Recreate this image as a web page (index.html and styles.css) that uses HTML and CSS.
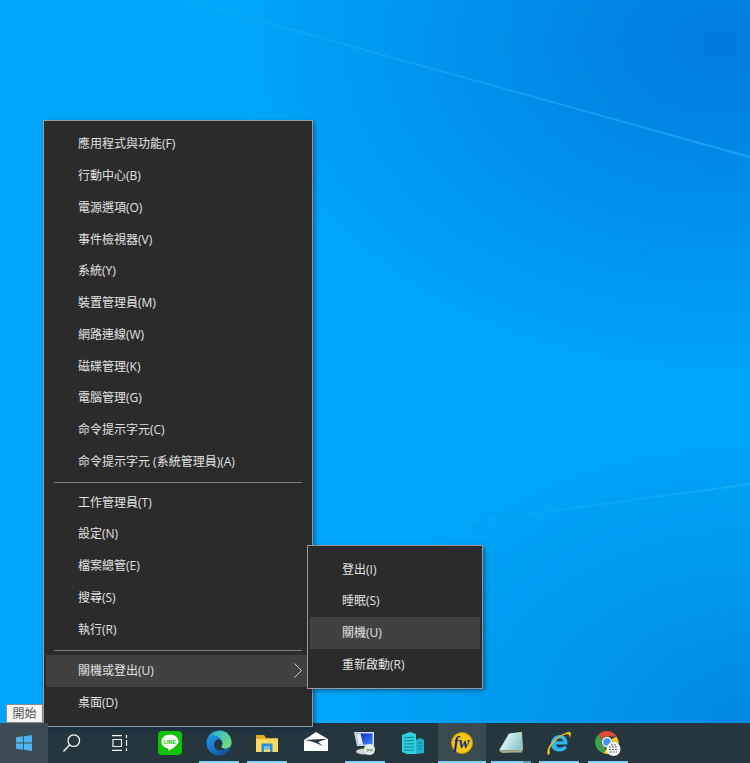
FILE: index.html
```html
<!DOCTYPE html>
<html lang="zh-Hant">
<head>
<meta charset="utf-8">
<title>Windows 10 Start context menu</title>
<link rel="stylesheet" href="styles.css">
</head>
<body>
<div class="desktop">
  <main class="wallpaper">
    <svg class="beams" viewBox="0 0 750 723" aria-hidden="true">
      <defs>
        <linearGradient id="upperBeam" x1="0" y1="0" x2="1" y2="0">
          <stop offset="0" stop-color="#1fb0fa" stop-opacity="0.25"/>
          <stop offset="1" stop-color="#28b0f5" stop-opacity="0.7"/>
        </linearGradient>
        <linearGradient id="lowerBeam" x1="0" y1="0" x2="1" y2="0">
          <stop offset="0" stop-color="#30bdfa" stop-opacity="0"/>
          <stop offset="1" stop-color="#30bdfa" stop-opacity="0.4"/>
        </linearGradient>
      </defs>
      <path d="M185 0 750 157" stroke="url(#upperBeam)" stroke-width="2" fill="none"/>
      <path d="M390 533C520 515 640 498 750 484" stroke="url(#lowerBeam)" stroke-width="2" fill="none"/>
    </svg>

    <div class="tooltip">開始</div>

    <nav class="menu menu-main">
      <div class="menu-item">應用程式與功能(F)</div>
      <div class="menu-item">行動中心(B)</div>
      <div class="menu-item">電源選項(O)</div>
      <div class="menu-item">事件檢視器(V)</div>
      <div class="menu-item">系統(Y)</div>
      <div class="menu-item">裝置管理員(M)</div>
      <div class="menu-item">網路連線(W)</div>
      <div class="menu-item">磁碟管理(K)</div>
      <div class="menu-item">電腦管理(G)</div>
      <div class="menu-item">命令提示字元(C)</div>
      <div class="menu-item">命令提示字元 (系統管理員)(A)</div>
      <div class="menu-sep menu-sep-tight"></div>
      <div class="menu-item">工作管理員(T)</div>
      <div class="menu-item">設定(N)</div>
      <div class="menu-item">檔案總管(E)</div>
      <div class="menu-item">搜尋(S)</div>
      <div class="menu-item">執行(R)</div>
      <div class="menu-sep"></div>
      <div class="menu-item is-active">
        <span>關機或登出(U)</span>
        <svg class="chevron" viewBox="0 0 8 15" aria-hidden="true"><path d="M.5 .5 7.500 7.500 .5 14.500" fill="none" stroke="#d0d0d0" stroke-width="1"/></svg>
      </div>
      <div class="menu-item">桌面(D)</div>
    </nav>

    <nav class="menu menu-sub">
      <div class="menu-item">登出(I)</div>
      <div class="menu-item">睡眠(S)</div>
      <div class="menu-item is-active">關機(U)</div>
      <div class="menu-item">重新啟動(R)</div>
    </nav>
  </main>

  <footer class="taskbar">
    <div class="task task-fixed task-start">
      <svg class="ic-16" viewBox="0 0 16 16" aria-hidden="true"><path d="M0 2.300 6.900 1.300V7.500H0ZM7.800 1.200 16 0V7.500H7.800ZM0 8.400H6.900V14.700L0 13.700ZM7.800 8.400H16V16L7.800 14.800Z" fill="#4db4f0"/></svg>
    </div>
    <div class="task task-fixed">
      <svg class="ic-20" viewBox="0 0 20 20" aria-hidden="true"><circle cx="11.800" cy="7.600" r="5.800" fill="none" stroke="#f2f2f2" stroke-width="1.300"/><path d="M7.600 11.800 1.500 18.500" stroke="#f2f2f2" stroke-width="1.500"/></svg>
    </div>
    <div class="task task-fixed task-view">
      <svg class="ic-16" viewBox="0 0 16 16" aria-hidden="true"><path d="M0 .6H10M0 15.400H10M1 4.500H9.500V11.500H1ZM14.500 0V3M14.500 5V11M14.500 13V16" fill="none" stroke="#f2f2f2" stroke-width="1.200"/></svg>
    </div>
    <div class="task task-first">
      <svg class="ic-24" viewBox="0 0 24 24" aria-hidden="true"><rect width="24" height="24" rx="4" fill="#0fc300"/><path d="M12 3.500C7 3.500 3.400 6.800 3.400 10.800c0 3.400 2.800 6 6.600 6.600.6.100.5 1.600.3 2.400 3-1.300 6-3.300 8-5.400C19.900 13 20.600 12 20.600 10.800 20.600 6.800 17 3.500 12 3.500Z" fill="#fff"/><text class="line-text" x="12" y="12.800" text-anchor="middle">LINE</text></svg>
    </div>
    <div class="task is-open">
      <svg class="ic-26" viewBox="0 0 26 26" aria-hidden="true">
        <defs>
          <linearGradient id="edgeBlue" x1="0" y1="0" x2="0.7" y2="1"><stop offset="0" stop-color="#1fa3e6"/><stop offset="0.6" stop-color="#1878c8"/><stop offset="1" stop-color="#0c4f98"/></linearGradient>
          <linearGradient id="edgeGreen" x1="0" y1="0" x2="1" y2="1"><stop offset="0" stop-color="#22b5d0"/><stop offset="1" stop-color="#86e070"/></linearGradient>
        </defs>
        <circle cx="13" cy="13" r="12.500" fill="url(#edgeBlue)"/>
        <path d="M5 5.500C8 1.500 13 .3 17 1 22 2.300 25.500 7 25.500 12.500 25.500 16 23 18.500 19 18.500 17 18.500 15 17.800 15 16.800 16.500 15.500 17 14 16.500 12 15.500 8 10.500 4.500 5 5.500Z" fill="url(#edgeGreen)"/>
        <path d="M8 15C8 11.500 10.500 9 13 9.500 15.500 10 17 13 15.500 15.500 15 17 15.500 18.500 19 19 17 20 12 21.500 10 19 8.800 18 8 16.500 8 15Z" fill="#25363f"/>
      </svg>
    </div>
    <div class="task is-open">
      <svg class="ic-folder" viewBox="0 0 22 17" aria-hidden="true"><path d="M0 0H8L10 3H22V17H0Z" fill="#e9a820"/><path d="M0 4H22V17H0Z" fill="#fbd860"/><path d="M5.500 8.500H16.500V17H14V11.500H8V17H5.500Z" fill="#2a8fd8"/><rect x="8" y="11.500" width="6" height="3" fill="#6cc2f2"/></svg>
    </div>
    <div class="task">
      <svg class="ic-24" viewBox="0 0 24 24" aria-hidden="true"><path d="M0 9 12 1 24 8V20H0Z" fill="#fff"/><path d="M1 9 23 7.700 14 11 19 15 9.500 11Z" fill="#25363f"/></svg>
    </div>
    <div class="task is-open">
      <svg class="ic-24" viewBox="0 0 24 24" aria-hidden="true"><defs><linearGradient id="pcBlue" x1="0" y1="0" x2="1" y2="1"><stop offset="0" stop-color="#0a1fc8"/><stop offset="1" stop-color="#3f86f0"/></linearGradient></defs><path d="M1 1H21V15H4Z" fill="#cfd8e6"/><path d="M3 2.500H19.500V13.500H5.500Z" fill="url(#pcBlue)"/><path d="M3 2.500H7.500L10 13.500H5.500Z" fill="#e8effc"/><ellipse cx="11" cy="20.500" rx="8" ry="3" fill="#cfd3d6"/><circle cx="16.500" cy="18.500" r="5.500" fill="#e6e9e6"/><text class="mini-x" x="16.500" y="20.500" text-anchor="middle">&gt;&lt;</text></svg>
    </div>
    <div class="task">
      <svg class="ic-24" viewBox="0 0 24 24" aria-hidden="true"><path d="M1 4 9 1 15 3V23H6L1 21Z" fill="#30d2de"/><path d="M15 9 19 7 23 9V22L15 23Z" fill="#22b4cc"/><path d="M3 7 13 6M3 10 13 9.500M3 13 13 12.800M3 16 13 16M3 19 13 19.300M17 12H21.500M17 15H21.500M17 18H21.500" stroke="#0d7d92" stroke-width="1"/></svg>
    </div>
    <div class="task is-open is-focus">
      <svg class="ic-22" viewBox="0 0 22 22" aria-hidden="true"><circle cx="11" cy="11" r="10.500" fill="#f5c518" stroke="#c99a00" stroke-width="1"/><text class="fw-text" x="10.500" y="15.500" text-anchor="middle">fw</text></svg>
    </div>
    <div class="task is-open is-stacked">
      <svg class="ic-24" viewBox="0 0 24 24" aria-hidden="true"><defs><linearGradient id="padSheet" x1="0" y1="0" x2="1" y2="0.500"><stop offset="0" stop-color="#1f7f8c"/><stop offset="0.4" stop-color="#d6eef0"/><stop offset="1" stop-color="#8fc8cc"/></linearGradient></defs><path d="M20 1.500 23 1 24 19H20Z" fill="#c9c4a0"/><path d="M10 2.500 22 1 23.500 19 0 19.500Z" fill="url(#padSheet)"/><path d="M0 19.500 23.500 19 23 21.500 3 22Z" fill="#a9aa8c"/></svg>
    </div>
    <div class="task is-open">
      <svg class="ic-26" viewBox="0 0 26 26" aria-hidden="true"><path d="M13.500 5C19 5 22 9 21.500 14.500H10C10.500 18 15.500 18.800 19 15.500L21 18.500C15 24 5 22 5 14 5 9 8.500 5 13.500 5Z" fill="#2fb4ea"/><path d="M10 11.300H17C16.800 7.500 10.800 7.500 10 11.300Z" fill="#25363f"/><path d="M2 25C-1 21 5 8 22 2 25 1 26 4 23.500 8 24 4 22 3 17 5.500 8 10 2 19 4 22.500 3.500 24 3 25 2 25Z" fill="#f2bd22"/></svg>
    </div>
    <div class="task is-open">
      <svg class="ic-26" viewBox="0 0 26 26" aria-hidden="true"><path d="M12 1A11 11 0 0 1 21.500 6.500H12A5.500 5.500 0 0 0 7 10L3.500 4.500A11 11 0 0 1 12 1Z" fill="#e04a3a"/><path d="M3.500 4.500 7 10A5.500 5.500 0 0 0 11 17.500L8 23A11 11 0 0 1 3.500 4.500Z" fill="#3da44d"/><path d="M21.500 6.500A11 11 0 0 1 8 23L13 17A5.500 5.500 0 0 0 16.500 9Z" fill="#f6c52d"/><circle cx="12" cy="12" r="4.500" fill="#4a90e8" stroke="#fff" stroke-width="1.300"/><circle cx="18.500" cy="19" r="7" fill="#f5f5f5"/><path d="M14 17H23M14 19.500H23M15 22H22M16 15H21" stroke="#666" stroke-width="1" stroke-dasharray="2 1"/></svg>
    </div>
  </footer>
</div>
</body>
</html>
```

FILE: styles.css
```css
* { box-sizing: border-box; }

html, body {
  margin: 0;
  height: 100%;
  overflow: hidden;
}

.desktop {
  display: flex;
  flex-direction: column;
  width: 750px;
  height: 763px;
  font-family: "Open Sans", "Noto Sans CJK TC", sans-serif;
}

.wallpaper {
  position: relative;
  flex: 1;
  background:
    radial-gradient(ellipse 480px 340px at 96% 6%, #007bdc 0%, rgba(0, 128, 224, 0.7) 38%, rgba(0, 150, 240, 0) 100%),
    radial-gradient(ellipse 420px 300px at 100% 100%, #0088e0 0%, rgba(0, 140, 228, 0.6) 40%, rgba(0, 160, 245, 0) 100%),
    #00a6f8;
}

.beams {
  position: absolute;
  inset: 0;
  width: 100%;
  height: 100%;
}

.tooltip {
  position: absolute;
  left: 6px;
  top: 704px;
  width: 37px;
  height: 19px;
  background: #f6f6f6;
  border: 1px solid #8e8e8e;
  color: #555;
  font-size: 12px;
  line-height: 17px;
  text-align: center;
}

.menu {
  position: absolute;
  display: flex;
  flex-direction: column;
  background: #2b2b2b;
  border: 1px solid #9a9a9a;
  box-shadow: 2px 2px 4px rgba(0, 30, 60, 0.45);
  color: #e2e2e2;
  font-size: 12px;
}

.menu-main {
  left: 43px;
  top: 120px;
  width: 270px;
  height: 607px;
  padding: 7.25px 2px 0;
}

.menu-sub {
  left: 307px;
  top: 545px;
  width: 176px;
  height: 144px;
  padding: 7.5px 2px 0;
}

.menu-item {
  display: flex;
  flex: none;
  align-items: center;
  justify-content: space-between;
  height: 31.75px;
  padding: 0 8px 1.5px 32px;
  white-space: nowrap;
}

.menu-item.is-active {
  background: #414141;
}

.chevron {
  width: 8px;
  height: 15px;
}

.menu-sep {
  flex: none;
  height: 1px;
  margin: 4.75px 8px 4px;
  background: #7c7c7c;
}

.menu-sep-tight {
  margin-top: 4px;
}

.taskbar {
  display: flex;
  flex: none;
  align-items: center;
  height: 40px;
  background: #25363f;
}

.task {
  position: relative;
  display: flex;
  flex: none;
  align-items: center;
  justify-content: center;
  width: 48.67px;
  height: 40px;
}

.task-fixed {
  width: 48px;
}

.task-first {
  margin-left: 1.6px;
}

.task-start {
  background: #3d4c54;
}

.task-view svg {
  margin-right: 1px;
}

.is-focus {
  background: #3b4950;
}

.is-open::after {
  content: "";
  position: absolute;
  left: 4.33px;
  right: 4.33px;
  bottom: 0;
  height: 2px;
  background: #7fd0f5;
}

.is-focus::after {
  left: 0;
  right: 0;
}

.is-stacked::after {
  background: linear-gradient(90deg, #7fd0f5 0 32px, #5f9fbf 32px);
}

.ic-16 { width: 16px; height: 16px; }
.ic-20 { width: 20px; height: 20px; }
.ic-22 { width: 22px; height: 22px; }
.ic-24 { width: 24px; height: 24px; }
.ic-26 { width: 26px; height: 26px; }
.ic-folder { width: 22px; height: 17px; }

.line-text {
  font-family: "Liberation Sans", sans-serif;
  font-size: 5.5px;
  font-weight: 700;
  fill: #0fc300;
}

.mini-x {
  font-family: "Liberation Sans", sans-serif;
  font-size: 6px;
  font-weight: 700;
  fill: #2e8b3d;
}

.fw-text {
  font-family: "Liberation Serif", serif;
  font-size: 16px;
  font-style: italic;
  font-weight: 700;
  fill: #142a7c;
}
```
